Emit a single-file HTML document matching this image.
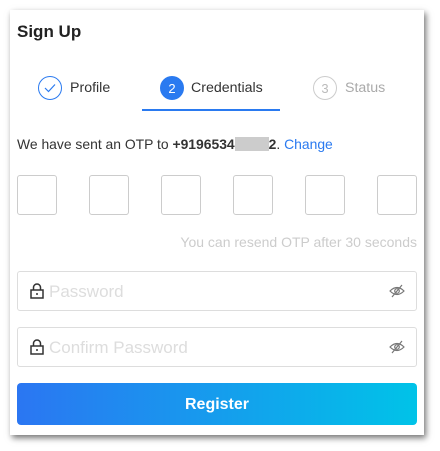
<!DOCTYPE html>
<html><head><style>
body{margin:0;width:440px;height:451px;background:#fff;font-family:"Liberation Sans",sans-serif;position:relative;overflow:hidden}
.card{position:absolute;left:10px;top:10px;width:414px;height:425px;background:#fff;box-shadow:2px 3px 6px rgba(0,0,0,.55)}
.a{position:absolute}
.t{font-size:17px;font-weight:bold;color:#222;left:17px;top:22px}
.c{width:22px;height:22px;border-radius:50%;border:1px solid;display:flex;align-items:center;justify-content:center;font-size:13px}
.lbl{font-size:14.2px;top:80px}
.box{width:38px;height:38px;border:1px solid #ccc;border-radius:3px;top:175px}
.inp{left:17px;width:398px;height:38px;border:1px solid #ddd;border-radius:3px}
.ph{position:absolute;left:31px;top:10px;font-size:17px;color:#ddd}
</style></head><body>
<div class="card"></div>
<div class="a t">Sign Up</div>
<div class="a c" style="left:38px;top:76px;border-color:#2a7af0;color:#2a7af0"><svg width="12" height="10" viewBox="0 0 12 10"><path d="M1 5 L4.5 8.5 L11 1.5" fill="none" stroke="#2a7af0" stroke-width="1.2"/></svg></div>
<div class="a lbl" style="left:70px;color:#333">Profile</div>
<div class="a c" style="left:160px;top:76px;border-color:#2a7af0;background:#2a7af0;color:#fff">2</div>
<div class="a lbl" style="left:191px;color:#333">Credentials</div>
<div class="a" style="left:142px;top:109px;width:138px;height:2px;background:#2a7af0"></div>
<div class="a c" style="left:313px;top:76px;border-color:#ccc;color:#bbb">3</div>
<div class="a lbl" style="left:345px;color:#aaa">Status</div>
<div class="a" style="left:17px;top:136px;font-size:13.9px;color:#333">We have sent an OTP to <b>+9196534<span style="display:inline-block;width:34px;height:14px;background:#ccc;vertical-align:-2px"></span>2</b>. <span style="color:#2a7af0">Change</span></div>
<div class="a box" style="left:17px"></div><div class="a box" style="left:89px"></div><div class="a box" style="left:161px"></div><div class="a box" style="left:233px"></div><div class="a box" style="left:305px"></div><div class="a box" style="left:377px"></div>
<div class="a" style="right:23px;top:234px;font-size:14px;color:#ccc">You can resend OTP after 30 seconds</div>
<div class="a inp" style="top:271px"><svg class="a" style="left:12px;top:11px" width="14" height="16" viewBox="0 0 14 16"><path d="M3.5 7V4.5a3.5 3.5 0 0 1 7 0V7" fill="none" stroke="#333" stroke-width="1.5"/><rect x="1" y="7" width="12" height="8" fill="none" stroke="#333" stroke-width="1.5"/><circle cx="7" cy="11" r="1" fill="#333"/></svg><div class="ph">Password</div><svg class="a" style="left:371px;top:12px" width="16" height="14" viewBox="0 0 16 14"><path d="M1 7 Q8 0 15 7 Q8 14 1 7Z" fill="none" stroke="#777" stroke-width="1.2"/><circle cx="8" cy="7" r="2.3" fill="none" stroke="#777" stroke-width="1.2"/><path d="M13 1 L3 13" stroke="#777" stroke-width="1.2"/></svg></div>
<div class="a inp" style="top:327px"><svg class="a" style="left:12px;top:11px" width="14" height="16" viewBox="0 0 14 16"><path d="M3.5 7V4.5a3.5 3.5 0 0 1 7 0V7" fill="none" stroke="#333" stroke-width="1.5"/><rect x="1" y="7" width="12" height="8" fill="none" stroke="#333" stroke-width="1.5"/><circle cx="7" cy="11" r="1" fill="#333"/></svg><div class="ph">Confirm Password</div><svg class="a" style="left:371px;top:12px" width="16" height="14" viewBox="0 0 16 14"><path d="M1 7 Q8 0 15 7 Q8 14 1 7Z" fill="none" stroke="#777" stroke-width="1.2"/><circle cx="8" cy="7" r="2.3" fill="none" stroke="#777" stroke-width="1.2"/><path d="M13 1 L3 13" stroke="#777" stroke-width="1.2"/></svg></div>
<div class="a" style="left:17px;top:383px;width:400px;height:42px;border-radius:4px;background:linear-gradient(90deg,#2b76f2,#00c3e8);color:#fff;font-weight:bold;font-size:16px;display:flex;align-items:center;justify-content:center;padding-top:2px;box-sizing:border-box">Register</div>
</body></html>
